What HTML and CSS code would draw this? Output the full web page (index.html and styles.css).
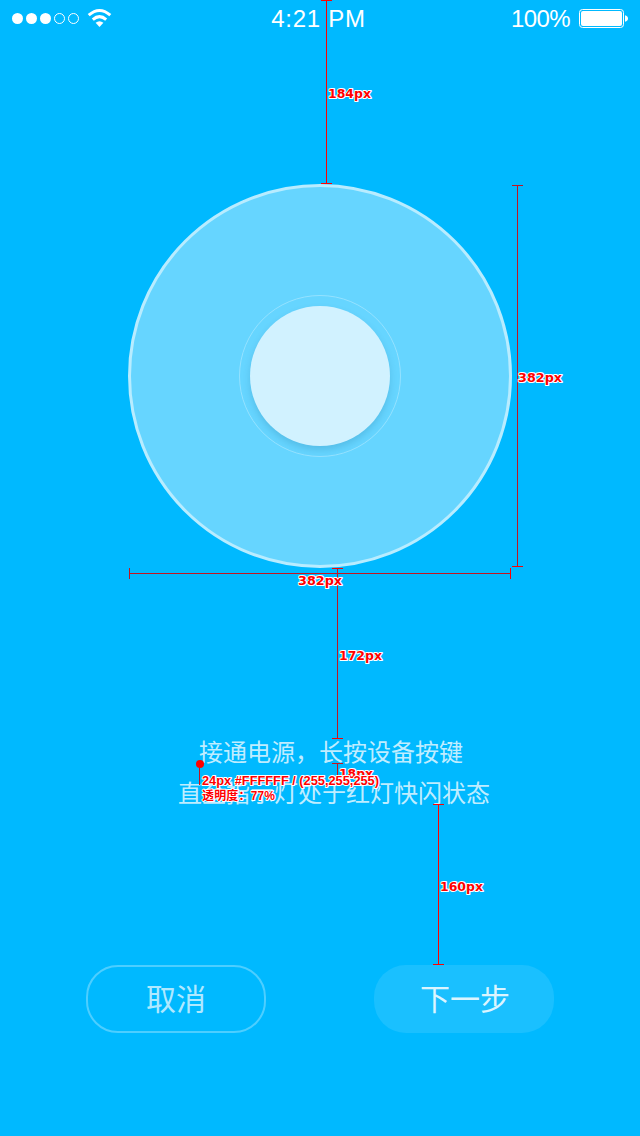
FILE: index.html
```
<!DOCTYPE html>
<html lang="zh-CN">
<head>
<meta charset="utf-8">
<title>接通电源</title>
<link rel="stylesheet" href="styles.css">
</head>
<body>
<main class="screen">
  <header class="status">
    <svg class="signal" width="104" height="24" viewBox="0 0 104 24">
      <g fill="#fff"><circle cx="5.5" cy="11.5" r="5.5"/><circle cx="19.5" cy="11.5" r="5.5"/><circle cx="33.5" cy="11.5" r="5.5"/></g>
      <g fill="none" stroke="#fff"><circle cx="47.5" cy="11.5" r="5"/><circle cx="61.5" cy="11.5" r="5"/></g>
      <g fill="none" stroke="#fff" stroke-width="3"><path d="M76.7 8.2Q87.5-1.2 98.3 8.2"/><path d="M80.8 12.6Q87.5 6.7 94.2 12.6"/></g>
      <path fill="#fff" d="M83.6 15.7Q87.5 12.7 91.4 15.7L87.5 20Z"/>
    </svg>
    <span class="time">4:21 PM</span>
    <span class="power">100%
      <svg width="50" height="20" viewBox="0 0 50 20">
        <rect x=".5" y=".5" width="44" height="18" rx="3" fill="none" stroke="#fff"/>
        <rect x="2" y="2" width="41" height="15" rx="2" fill="#fff"/>
        <path d="M46 6.2Q49 7 49 9.5T46 12.8Z" fill="#fff"/>
      </svg>
    </span>
  </header>
  <div class="device"><div class="ring"><div class="knob"></div></div></div>
  <div class="guide">
    <p class="line-one">接通电源，长按设备按键</p>
    <p class="line-two">直至指示灯处于红灯快闪状态</p>
  </div>
  <nav class="actions">
    <button class="btn cancel">取消</button>
    <button class="btn next">下一步</button>
  </nav>

  <svg class="marks" width="640" height="1136" viewBox="0 0 640 1136">
    <g class="rule">
      <path d="M326.5 0V184M321 .5H332M321 183.5H332"/>
      <path class="dim" d="M517.5 186V566"/><path class="dim" d="M512 185.5H523"/><path d="M512 566.5H523"/>
      <path class="dim" d="M130 573.5H510M129.5 568V579"/><path d="M510.5 568V579"/>
      <path class="dim" d="M337.5 569V738"/><path d="M332 568.5H343M332 738.5H343"/>
      <path class="dim" d="M337.5 764V782M332 763.5H343M199.5 764V785"/>
      <path d="M438.5 804V964M433 804.5H444M433 964.5H444"/>
    </g>
    <circle cx="200" cy="764" r="4" fill="#f00"/>
    <g class="label">
      <text x="328" y="98" textLength="43" lengthAdjust="spacingAndGlyphs">184px</text>
      <text x="518" y="382" textLength="44" lengthAdjust="spacingAndGlyphs">382px</text>
      <text x="298" y="585" textLength="44" lengthAdjust="spacingAndGlyphs">382px</text>
      <text x="339" y="660" textLength="43" lengthAdjust="spacingAndGlyphs">172px</text>
      <text x="339" y="778" textLength="34" lengthAdjust="spacingAndGlyphs">18px</text>
      <text x="440" y="891" textLength="43" lengthAdjust="spacingAndGlyphs">160px</text>
      <text class="spec" x="202" y="785" textLength="177" lengthAdjust="spacingAndGlyphs">24px #FFFFFF / (255,255,255)</text>
      <text class="spec" x="202" y="800" textLength="73">透明度<tspan class="colon">：</tspan>77%</text>
    </g>
  </svg>
</main>
</body>
</html>
```
FILE: styles.css
```
* { box-sizing: border-box; }
body { margin: 0; background: #00b9ff; }
.screen {
  position: relative;
  display: flex;
  flex-direction: column;
  align-items: center;
  width: 640px;
  height: 1136px;
  overflow: hidden;
  background: #00b9ff;
  color: #fff;
  font-family: "Liberation Sans", "Noto Sans CJK SC", sans-serif;
}
.status {
  display: grid;
  grid-template-columns: 1fr auto 1fr;
  align-items: center;
  width: 100%;
  height: 38px;
  padding: 0 11px 0 12px;
  font-size: 24px;
}
.signal { margin-top: 0; }
.time { margin-right: 4px; letter-spacing: .75px; }
.power { display: flex; justify-content: flex-end; align-items: center; gap: 9px; letter-spacing: -.6px; }
.device {
  display: grid;
  place-items: center;
  width: 384px;
  height: 384px;
  margin-top: 146px;
  border: 3px solid #b8ecff;
  border-radius: 50%;
  background: #66d5ff;
}
.ring {
  display: grid;
  place-items: center;
  width: 162px;
  height: 162px;
  border: 1px solid #94e2ff;
  border-radius: 50%;
}
.knob {
  width: 140px;
  height: 140px;
  border-radius: 50%;
  background: #d1f2ff;
  box-shadow: 0 4px 7px rgba(0, 80, 120, .17);
}
.guide {
  width: 100%;
  margin-top: 162px;
  color: rgba(255, 255, 255, .77);
  font: 400 24px/41px "Noto Sans CJK SC", sans-serif;
}
.guide p { margin: 0; }
.line-one { padding-left: 199px; }
.line-two { padding-left: 178px; }
.actions { display: flex; gap: 108px; margin-top: 153px; }
.btn {
  width: 180px;
  height: 68px;
  padding: 0 0 4px;
  border: 0;
  border-radius: 32px;
  background: none;
  font: 400 30px/60px "Noto Sans CJK SC", sans-serif;
}
.cancel { border: 2px solid #4dceff; color: rgba(255, 255, 255, .7); }
.next { padding-left: 2px; background: #1ac0ff; color: rgba(255, 255, 255, .86); }
.marks { position: absolute; inset: 0; }
.rule { fill: none; stroke: #f00; stroke-width: 1; shape-rendering: crispEdges; }
.rule .dim { stroke: #c41420; }
.label {
  fill: #f00;
  stroke: #fff;
  stroke-width: 2px;
  stroke-linejoin: round;
  paint-order: stroke;
  font: bold 12px "DejaVu Sans", "Noto Sans CJK SC", sans-serif;
}
.spec { font-family: "Liberation Sans", "Noto Sans CJK SC", sans-serif; }
.colon { font-family: "Noto Sans CJK TC", sans-serif; }
```
